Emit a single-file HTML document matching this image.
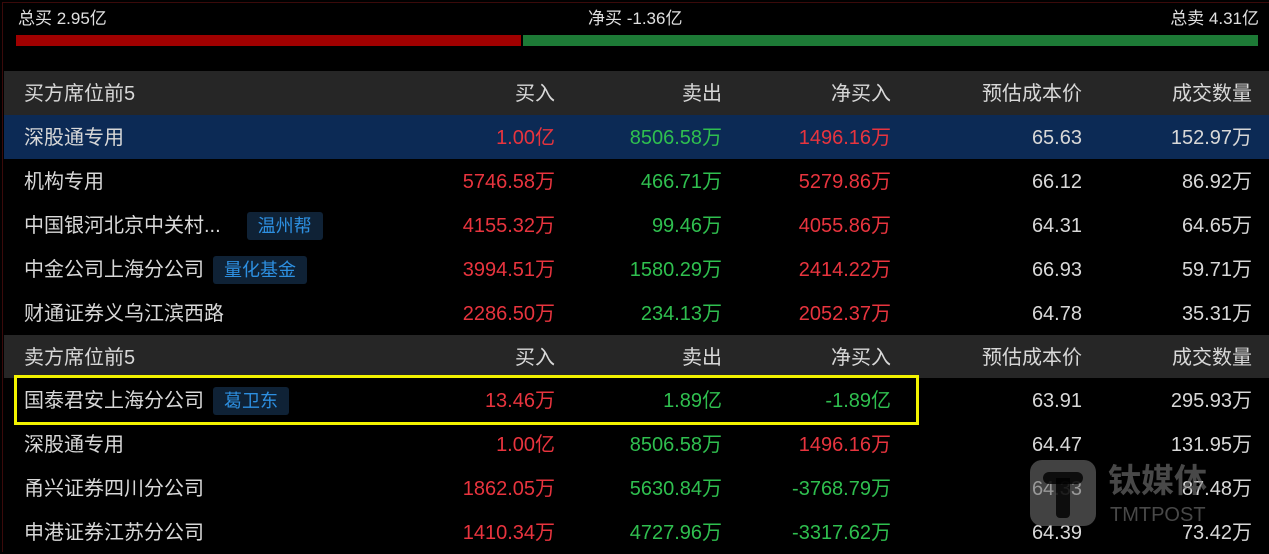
<!DOCTYPE html>
<html><head><meta charset="utf-8"><style>
body{margin:0;width:1269px;height:552px;background:#000;overflow:hidden;font-family:"Liberation Sans","Noto Sans CJK SC",sans-serif;color:#d8d8d8;position:relative}
.frame{position:absolute;left:2px;top:2px;right:0;bottom:0;border-left:1px solid #3a0a0a;border-top:1px solid #3a0a0a}
.top{position:absolute;top:9px;font-size:17px;line-height:20px;color:#e0e0e0}
.bar{position:absolute;top:35px;height:11px}
.row{position:absolute;left:4px;width:1265px;height:44px;font-size:20px}
.row span{position:absolute;top:12px;line-height:22px;height:22px;white-space:nowrap;display:block}
.n{left:20px}
.c1{right:714px}.c2{right:547px}.c3{right:378px}.c4{right:187px}.c5{right:17px}
.hd{background:#262626}
.r{color:#e8343e}.g{color:#2fbf4f}
.tag{display:inline-block;background:#0f2236;color:#2d8fe0;font-size:18px;line-height:28px;height:28px;padding:0 11px;border-radius:3px;vertical-align:top;margin-top:-3px;font-style:normal}
</style></head><body>
<div class="frame"></div>
<div class="top" style="left:18px">总买 2.95亿</div>
<div class="top" style="left:588px">净买 -1.36亿</div>
<div class="top" style="right:10px">总卖 4.31亿</div>
<div class="bar" style="left:16px;width:505px;background:#a00000"></div>
<div class="bar" style="left:523px;width:735px;background:#1d7a36"></div>

<div class="row hd" style="top:71px"><span class="n">买方席位前5</span><span class="c1">买入</span><span class="c2">卖出</span><span class="c3">净买入</span><span class="c4">预估成本价</span><span class="c5">成交数量</span></div>
<div class="row" style="top:115px;background:#0c2a55"><span class="n">深股通专用</span><span class="c1 r">1.00亿</span><span class="c2 g">8506.58万</span><span class="c3 r">1496.16万</span><span class="c4">65.63</span><span class="c5">152.97万</span></div>
<div class="row" style="top:159px"><span class="n">机构专用</span><span class="c1 r">5746.58万</span><span class="c2 g">466.71万</span><span class="c3 r">5279.86万</span><span class="c4">66.12</span><span class="c5">86.92万</span></div>
<div class="row" style="top:203px"><span class="n">中国银河北京中关村...<i class="tag" style="margin-left:26px">温州帮</i></span><span class="c1 r">4155.32万</span><span class="c2 g">99.46万</span><span class="c3 r">4055.86万</span><span class="c4">64.31</span><span class="c5">64.65万</span></div>
<div class="row" style="top:247px"><span class="n">中金公司上海分公司<i class="tag" style="margin-left:9px">量化基金</i></span><span class="c1 r">3994.51万</span><span class="c2 g">1580.29万</span><span class="c3 r">2414.22万</span><span class="c4">66.93</span><span class="c5">59.71万</span></div>
<div class="row" style="top:291px"><span class="n">财通证券义乌江滨西路</span><span class="c1 r">2286.50万</span><span class="c2 g">234.13万</span><span class="c3 r">2052.37万</span><span class="c4">64.78</span><span class="c5">35.31万</span></div>
<div class="row hd" style="top:335px;height:43px"><span class="n">卖方席位前5</span><span class="c1">买入</span><span class="c2">卖出</span><span class="c3">净买入</span><span class="c4">预估成本价</span><span class="c5">成交数量</span></div>
<div class="row" style="top:378px"><span class="n">国泰君安上海分公司<i class="tag" style="margin-left:9px">葛卫东</i></span><span class="c1 r">13.46万</span><span class="c2 g">1.89亿</span><span class="c3 g">-1.89亿</span><span class="c4">63.91</span><span class="c5">295.93万</span></div>
<div class="row" style="top:422px"><span class="n">深股通专用</span><span class="c1 r">1.00亿</span><span class="c2 g">8506.58万</span><span class="c3 r">1496.16万</span><span class="c4">64.47</span><span class="c5">131.95万</span></div>
<div class="row" style="top:466px"><span class="n">甬兴证券四川分公司</span><span class="c1 r">1862.05万</span><span class="c2 g">5630.84万</span><span class="c3 g">-3768.79万</span><span class="c4">64.33</span><span class="c5">87.48万</span></div>
<div class="row" style="top:510px"><span class="n">申港证券江苏分公司</span><span class="c1 r">1410.34万</span><span class="c2 g">4727.96万</span><span class="c3 g">-3317.62万</span><span class="c4">64.39</span><span class="c5">73.42万</span></div>
<div style="position:absolute;left:14px;top:375px;width:899px;height:44px;border:3px solid #f2f200"></div>
<div style="position:absolute;left:1030px;top:460px;width:66px;height:66px;background:rgba(110,110,110,0.6);border-radius:12px"></div>
<div style="position:absolute;left:1043px;top:472px;width:40px;height:12px;background:rgba(0,0,0,0.8);border-radius:6px"></div>
<div style="position:absolute;left:1056px;top:478px;width:14px;height:40px;background:rgba(0,0,0,0.8);border-radius:0 0 4px 4px"></div>
<div style="position:absolute;left:1108px;top:461px;font-size:33px;line-height:40px;font-weight:bold;color:rgba(120,120,120,0.6)">钛媒体</div>
<div style="position:absolute;left:1110px;top:503px;font-size:20px;line-height:24px;color:rgba(120,120,120,0.6)">TMTPOST</div>
</body></html>
